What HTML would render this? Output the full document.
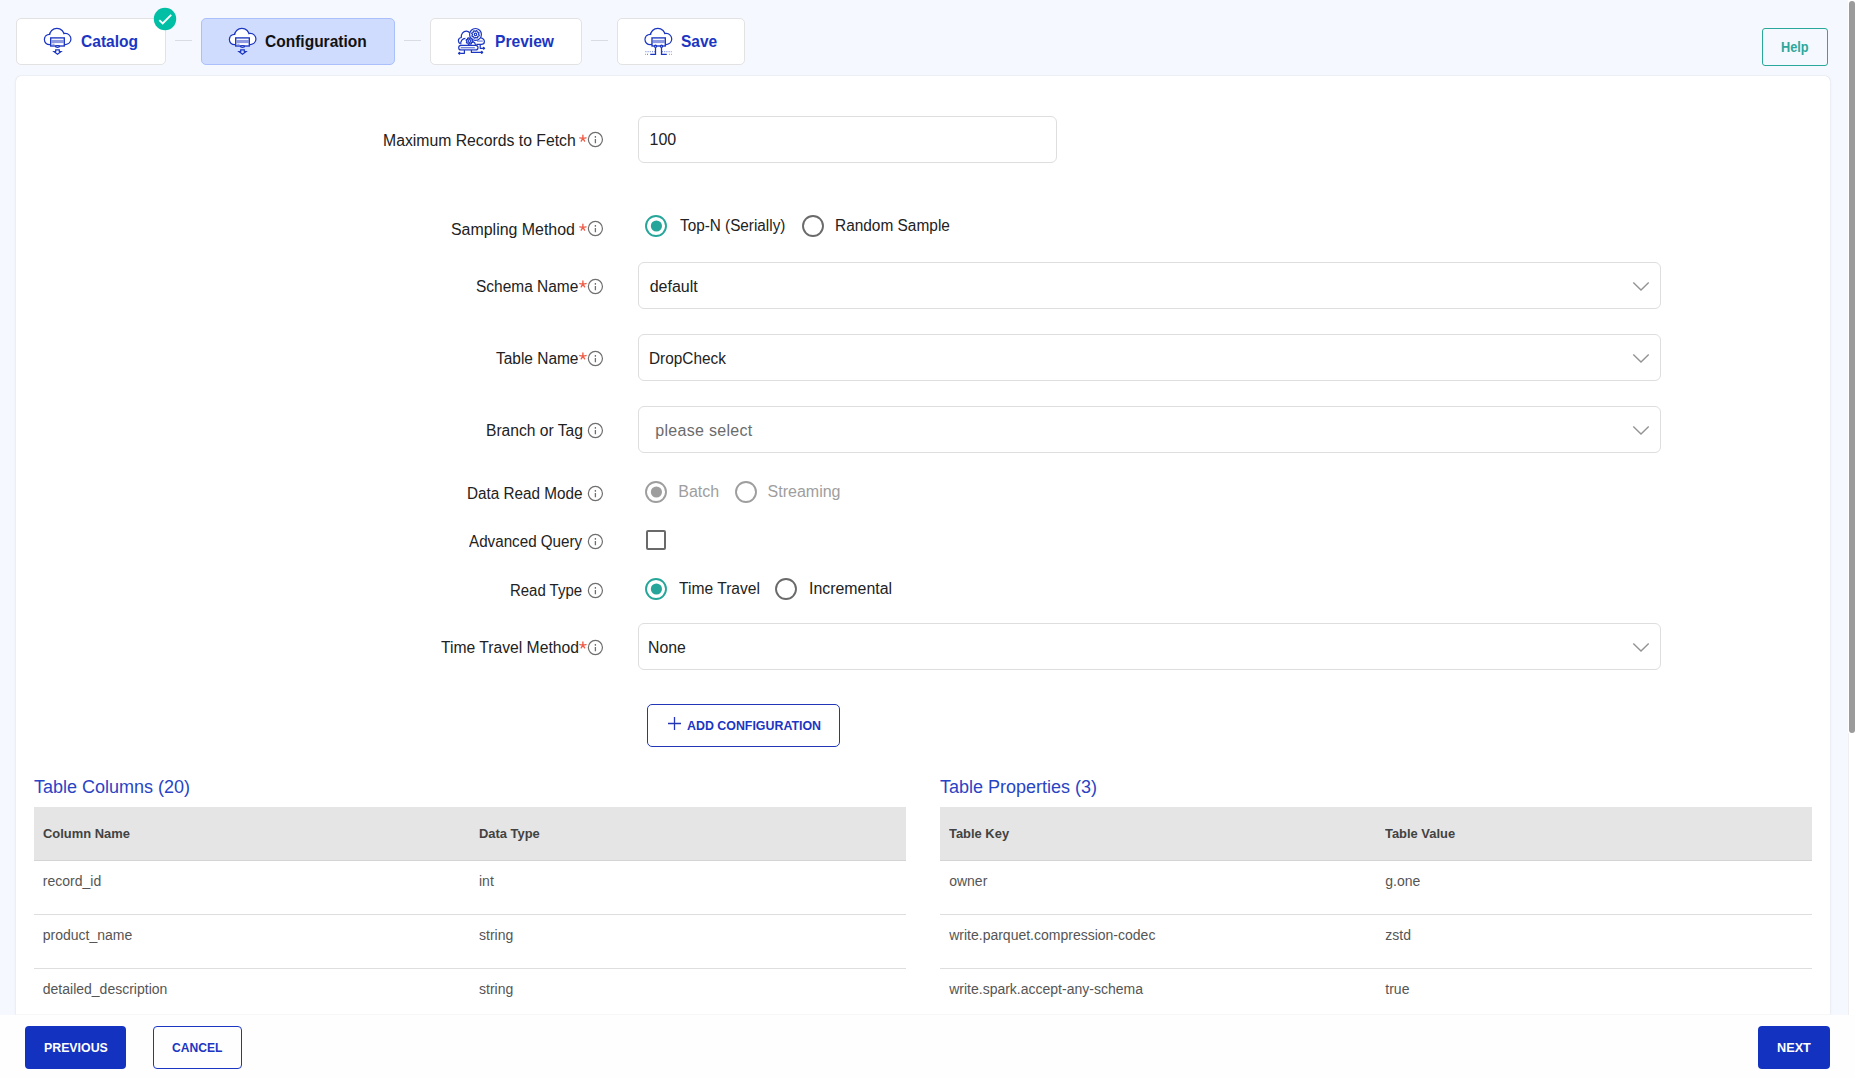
<!DOCTYPE html>
<html><head><meta charset="utf-8">
<style>
*{box-sizing:border-box;margin:0;padding:0}
html,body{width:1855px;height:1078px;overflow:hidden}
body{background:#f5f8fe;font-family:"Liberation Sans",sans-serif;position:relative;color:#222}
.a{position:absolute}
.t{position:absolute;line-height:1;white-space:nowrap}
.tab{position:absolute;top:18px;height:47px;background:#fff;border:1px solid #e2e2e2;border-radius:5px}
.tab.act{background:#d0dcfd;border-color:#abc0fb}
.conn{position:absolute;top:40px;height:1px;background:#d9dde3}
.card{position:absolute;left:16px;top:76px;width:1814px;height:939px;background:#fff;border-radius:5px 5px 0 0;box-shadow:0 0 1px rgba(0,0,0,.22),0 1px 4px rgba(0,0,0,.05)}
.box{position:absolute;left:638px;width:1023px;height:47px;border:1px solid #dedede;border-radius:6px;background:#fff}
.th{position:absolute;top:807px;height:54px;background:#e5e5e5;border-bottom:1px solid #d4d4d4}
.rl{position:absolute;height:1px;background:#dedede}
</style></head>
<body>
<div class="tab" style="left:16px;width:150px"></div>
<div class="conn" style="left:175px;width:17px"></div>
<div class="tab act" style="left:201px;width:194px"></div>
<div class="conn" style="left:404px;width:17px"></div>
<div class="tab" style="left:430px;width:152px"></div>
<div class="conn" style="left:591px;width:17px"></div>
<div class="tab" style="left:617px;width:128px"></div>
<div class="t" style="left:80.50px;top:32.81px;font-size:17px;color:#1b36c2;font-weight:700;transform:scaleX(0.915);transform-origin:left center;">Catalog</div>

<div class="t" style="left:265.30px;top:32.81px;font-size:17px;color:#111;font-weight:700;transform:scaleX(0.913);transform-origin:left center;">Configuration</div>

<div class="t" style="left:494.70px;top:32.81px;font-size:17px;color:#1b36c2;font-weight:700;transform:scaleX(0.918);transform-origin:left center;">Preview</div>

<div class="t" style="left:681.20px;top:32.81px;font-size:17px;color:#1b36c2;font-weight:700;transform:scaleX(0.912);transform-origin:left center;">Save</div>

<svg class="a" style="left:40px;top:24px" width="36" height="34" viewBox="0 0 36 34" stroke="#1b36c2" stroke-width="1.25" fill="none">
<g fill="none"><circle cx="9.6" cy="15.5" r="4.6" stroke-width="2.5"/><circle cx="16.9" cy="11.7" r="6.8" stroke-width="2.5"/><circle cx="25.4" cy="15.0" r="4.9" stroke-width="2.5"/></g><g fill="#fff" stroke="none"><circle cx="9.6" cy="15.5" r="4.6"/><circle cx="16.9" cy="11.7" r="6.8"/><circle cx="25.4" cy="15.0" r="4.9"/></g>
<rect x="10.7" y="13.9" width="13.6" height="8.1" fill="#fff" stroke-width="1.35"/>
<rect x="11.6" y="15.9" width="12" height="3.2" fill="#1b36c2" stroke="none" opacity=".5"/>
<path d="M12.2 20.3h2.4" opacity=".45"/>
<ellipse cx="17.5" cy="22.4" rx="2" ry=".85" fill="#fff"/>
<path d="M15.7 25.8H19.3V27.7H21L17.5 30.3L14 27.7H15.7Z" stroke-width="1.2"/>
</svg>
<svg class="a" style="left:224.5px;top:24px" width="36" height="34" viewBox="0 0 36 34" stroke="#1b36c2" stroke-width="1.25" fill="none">
<g fill="none"><circle cx="9.6" cy="15.5" r="4.6" stroke-width="2.5"/><circle cx="16.9" cy="11.7" r="6.8" stroke-width="2.5"/><circle cx="25.4" cy="15.0" r="4.9" stroke-width="2.5"/></g><g fill="#fff" stroke="none"><circle cx="9.6" cy="15.5" r="4.6"/><circle cx="16.9" cy="11.7" r="6.8"/><circle cx="25.4" cy="15.0" r="4.9"/></g>
<rect x="10.7" y="13.9" width="13.6" height="8.1" fill="#fff" stroke-width="1.35"/>
<rect x="11.6" y="15.9" width="12" height="3.2" fill="#1b36c2" stroke="none" opacity=".5"/>
<path d="M12.2 20.3h2.4" opacity=".45"/>
<ellipse cx="17.5" cy="22.4" rx="2" ry=".85" fill="#fff"/>
<path d="M15.7 25.8H19.3V27.7H21L17.5 30.3L14 27.7H15.7Z" stroke-width="1.2"/>
</svg>
<svg class="a" style="left:454px;top:24px" width="36" height="34" viewBox="0 0 36 34" stroke="#1b36c2" stroke-width="1.2" fill="none" stroke-linejoin="round">
<path d="M6.2 19.6C4.9 19 4.4 17.8 4.4 16.7c0-1.6 1.2-2.9 2.9-3.2-.3-3.7 2.1-6.3 5-6.3 1.6 0 2.7.7 3.5 1.8"/>
<circle cx="21.5" cy="10.4" r="5.9" fill="#fff"/>
<path d="M21.50 7.30 L22.26 6.57 L22.99 6.80 L23.22 7.82 L23.69 8.21 L24.74 8.23 L25.10 8.91 L24.54 9.80 L24.60 10.40 L25.33 11.16 L25.10 11.89 L24.08 12.12 L23.69 12.59 L23.67 13.64 L22.99 14.00 L22.10 13.44 L21.50 13.50 L20.74 14.23 L20.01 14.00 L19.78 12.98 L19.31 12.59 L18.26 12.57 L17.90 11.89 L18.46 11.00 L18.40 10.40 L17.67 9.64 L17.90 8.91 L18.92 8.68 L19.31 8.21 L19.33 7.16 L20.01 6.80 L20.90 7.36Z"/>
<circle cx="21.5" cy="10.4" r="1.2"/>
<path d="M26.3 13.6c2.4.5 4.1 2.1 4.1 4.2 0 1.6-1.3 2.6-3.3 2.6H22.3"/>
<path d="M23 17.1h5.8" stroke-width="1.5" opacity=".5"/>
<path d="M6.8 20.3c-.5-3.3 1.7-5.9 4.6-6" />
<path d="M15.50 14.30 L16.16 13.67 L16.80 13.86 L17.00 14.76 L17.41 15.09 L18.33 15.11 L18.64 15.70 L18.15 16.47 L18.20 17.00 L18.83 17.66 L18.64 18.30 L17.74 18.50 L17.41 18.91 L17.39 19.83 L16.80 20.14 L16.03 19.65 L15.50 19.70 L14.84 20.33 L14.20 20.14 L14.00 19.24 L13.59 18.91 L12.67 18.89 L12.36 18.30 L12.85 17.53 L12.80 17.00 L12.17 16.34 L12.36 15.70 L13.26 15.50 L13.59 15.09 L13.61 14.17 L14.20 13.86 L14.97 14.35Z" fill="#fff"/>
<circle cx="15.5" cy="17" r="1.4"/>
<path d="M18.8 17.6c1.4.3 2.5 1.5 2.8 3.2"/>
<rect x="4.7" y="21.3" width="19.3" height="4.7" rx="2.3" fill="#fff"/>
<path d="M6.8 23.6H20.8" stroke-width="1.3" opacity=".6"/>
<path d="M5.6 25.3H23" stroke-width="1.1" opacity=".45"/>
<path d="M10.4 26.1V29.3H6.3M17.4 26.1V28.4H27M26.2 21.1V24.3H28.8"/>
<path d="M5.4 28.4l.9.9-.9.9-.9-.9zM27.8 27.5l.9.9-.9.9-.9-.9zM29.7 23.4l.9.9-.9.9-.9-.9z" fill="#1b36c2"/>
</svg>
<svg class="a" style="left:640px;top:24px" width="36" height="34" viewBox="0 0 36 34" stroke="#1b36c2" stroke-width="1.25" fill="none">
<g fill="none"><circle cx="10.2" cy="15.5" r="4.6" stroke-width="2.5"/><circle cx="17.8" cy="11.7" r="6.8" stroke-width="2.5"/><circle cx="26.2" cy="15.0" r="4.9" stroke-width="2.5"/></g><g fill="#fff" stroke="none"><circle cx="10.2" cy="15.5" r="4.6"/><circle cx="17.8" cy="11.7" r="6.8"/><circle cx="26.2" cy="15.0" r="4.9"/></g>
<rect x="12" y="13.9" width="13.3" height="8.1" fill="#fff" stroke-width="1.35"/>
<rect x="12.8" y="15.9" width="11.8" height="3.2" fill="#1b36c2" stroke="none" opacity=".5"/>
<circle cx="15.5" cy="22.3" r="1.1" fill="#fff"/><circle cx="21.5" cy="22.3" r="1.1" fill="#fff"/>
<path d="M15.5 23.4V30.4H10.2M21.5 23.4V30.4H26.8"/>
<path d="M5.4 30.4h.4M7.4 30.4h.6M29 30.4h.4M31.2 30.4h.4" stroke-width="1.1"/>
<path d="M5.4 27.6H15M22 27.6H31.6" stroke-width="1.1" stroke-dasharray="1 1.2" opacity=".55"/>
</svg>
<svg class="a" style="left:153px;top:7px" width="24" height="24" viewBox="0 0 24 24"><circle cx="12" cy="12" r="11.2" fill="#00bfa5"/><path d="M6.3 13.1l3.4 3.3 8.5-8.5" fill="none" stroke="#fff" stroke-width="1.9"/></svg>
<div class="a" style="left:1762px;top:28px;width:66px;height:38px;border:1px solid #2aa89b;border-radius:3px"></div>
<div class="t" style="left:1780.80px;top:40.13px;font-size:14.5px;color:#2ea89c;font-weight:700;transform:scaleX(0.88);transform-origin:left center;">Help</div>

<div class="card"></div>
<div class="t" style="left:382.61px;top:133.06px;font-size:16px;color:#222;font-weight:400;transform:scaleX(0.9851);transform-origin:left center;">Maximum Records to Fetch</div>

<svg class="a" style="left:0;top:0;overflow:visible" width="1" height="1"><path d="M582.90 138.40L582.90 135.20M582.90 138.40L586.05 137.84M582.90 138.40L579.75 137.84M582.90 138.40L584.60 141.11M582.90 138.40L581.20 141.11" stroke="#ef5b45" stroke-width="1.35" stroke-linecap="round"/></svg>
<svg class="a" style="left:587px;top:131.30px" width="17" height="17" viewBox="0 0 17 17" fill="none" stroke="#6f6f6f" stroke-width="1.2"><circle cx="8.4" cy="8.5" r="7.05"/><path d="M8.4 7.9v4.3M8.4 5.1v1.7" stroke-width="1.3"/></svg>
<div class="t" style="left:451.30px;top:222.06px;font-size:16px;color:#222;font-weight:400;transform:scaleX(0.9951);transform-origin:left center;">Sampling Method</div>

<svg class="a" style="left:0;top:0;overflow:visible" width="1" height="1"><path d="M582.90 227.40L582.90 224.20M582.90 227.40L586.05 226.84M582.90 227.40L579.75 226.84M582.90 227.40L584.60 230.11M582.90 227.40L581.20 230.11" stroke="#ef5b45" stroke-width="1.35" stroke-linecap="round"/></svg>
<svg class="a" style="left:587px;top:220.20px" width="17" height="17" viewBox="0 0 17 17" fill="none" stroke="#6f6f6f" stroke-width="1.2"><circle cx="8.4" cy="8.5" r="7.05"/><path d="M8.4 7.9v4.3M8.4 5.1v1.7" stroke-width="1.3"/></svg>
<div class="t" style="left:475.83px;top:278.76px;font-size:16px;color:#222;font-weight:400;transform:scaleX(0.9667);transform-origin:left center;">Schema Name</div>

<svg class="a" style="left:0;top:0;overflow:visible" width="1" height="1"><path d="M582.90 284.10L582.90 280.90M582.90 284.10L586.05 283.54M582.90 284.10L579.75 283.54M582.90 284.10L584.60 286.81M582.90 284.10L581.20 286.81" stroke="#ef5b45" stroke-width="1.35" stroke-linecap="round"/></svg>
<svg class="a" style="left:587px;top:277.50px" width="17" height="17" viewBox="0 0 17 17" fill="none" stroke="#6f6f6f" stroke-width="1.2"><circle cx="8.4" cy="8.5" r="7.05"/><path d="M8.4 7.9v4.3M8.4 5.1v1.7" stroke-width="1.3"/></svg>
<div class="t" style="left:496.20px;top:350.76px;font-size:16px;color:#222;font-weight:400;transform:scaleX(0.9659);transform-origin:left center;">Table Name</div>

<svg class="a" style="left:0;top:0;overflow:visible" width="1" height="1"><path d="M582.90 356.10L582.90 352.90M582.90 356.10L586.05 355.54M582.90 356.10L579.75 355.54M582.90 356.10L584.60 358.81M582.90 356.10L581.20 358.81" stroke="#ef5b45" stroke-width="1.35" stroke-linecap="round"/></svg>
<svg class="a" style="left:587px;top:349.50px" width="17" height="17" viewBox="0 0 17 17" fill="none" stroke="#6f6f6f" stroke-width="1.2"><circle cx="8.4" cy="8.5" r="7.05"/><path d="M8.4 7.9v4.3M8.4 5.1v1.7" stroke-width="1.3"/></svg>
<div class="t" style="left:485.82px;top:422.96px;font-size:16px;color:#222;font-weight:400;transform:scaleX(0.9765);transform-origin:left center;">Branch or Tag</div>

<svg class="a" style="left:587px;top:421.50px" width="17" height="17" viewBox="0 0 17 17" fill="none" stroke="#6f6f6f" stroke-width="1.2"><circle cx="8.4" cy="8.5" r="7.05"/><path d="M8.4 7.9v4.3M8.4 5.1v1.7" stroke-width="1.3"/></svg>
<div class="t" style="left:466.55px;top:485.66px;font-size:16px;color:#222;font-weight:400;transform:scaleX(0.9542);transform-origin:left center;">Data Read Mode</div>

<svg class="a" style="left:587px;top:484.50px" width="17" height="17" viewBox="0 0 17 17" fill="none" stroke="#6f6f6f" stroke-width="1.2"><circle cx="8.4" cy="8.5" r="7.05"/><path d="M8.4 7.9v4.3M8.4 5.1v1.7" stroke-width="1.3"/></svg>
<div class="t" style="left:469.00px;top:533.96px;font-size:16px;color:#222;font-weight:400;transform:scaleX(0.9496);transform-origin:left center;">Advanced Query</div>

<svg class="a" style="left:587px;top:532.50px" width="17" height="17" viewBox="0 0 17 17" fill="none" stroke="#6f6f6f" stroke-width="1.2"><circle cx="8.4" cy="8.5" r="7.05"/><path d="M8.4 7.9v4.3M8.4 5.1v1.7" stroke-width="1.3"/></svg>
<div class="t" style="left:510.07px;top:582.66px;font-size:16px;color:#222;font-weight:400;transform:scaleX(0.9342);transform-origin:left center;">Read Type</div>

<svg class="a" style="left:587px;top:581.50px" width="17" height="17" viewBox="0 0 17 17" fill="none" stroke="#6f6f6f" stroke-width="1.2"><circle cx="8.4" cy="8.5" r="7.05"/><path d="M8.4 7.9v4.3M8.4 5.1v1.7" stroke-width="1.3"/></svg>
<div class="t" style="left:441.30px;top:639.86px;font-size:16px;color:#222;font-weight:400;transform:scaleX(0.9793);transform-origin:left center;">Time Travel Method</div>

<svg class="a" style="left:0;top:0;overflow:visible" width="1" height="1"><path d="M582.90 645.20L582.90 642.00M582.90 645.20L586.05 644.64M582.90 645.20L579.75 644.64M582.90 645.20L584.60 647.91M582.90 645.20L581.20 647.91" stroke="#ef5b45" stroke-width="1.35" stroke-linecap="round"/></svg>
<svg class="a" style="left:587px;top:638.50px" width="17" height="17" viewBox="0 0 17 17" fill="none" stroke="#6f6f6f" stroke-width="1.2"><circle cx="8.4" cy="8.5" r="7.05"/><path d="M8.4 7.9v4.3M8.4 5.1v1.7" stroke-width="1.3"/></svg>
<div class="box" style="top:116px;width:419px"></div>
<div class="t" style="left:649.50px;top:132.26px;font-size:16px;color:#222;font-weight:400;">100</div>

<svg class="a" style="left:645px;top:215px" width="22" height="22" viewBox="0 0 22 22"><circle cx="11" cy="11" r="10" fill="none" stroke="#26a69a" stroke-width="1.9"/><circle cx="11.4" cy="11" r="5.6" fill="#26a69a"/></svg>
<div class="t" style="left:679.70px;top:217.56px;font-size:16px;color:#222;font-weight:400;transform:scaleX(0.956);transform-origin:left center;">Top-N (Serially)</div>

<svg class="a" style="left:802px;top:215px" width="22" height="22" viewBox="0 0 22 22"><circle cx="11" cy="11" r="10" fill="none" stroke="#6a6a6a" stroke-width="1.9"/></svg>
<div class="t" style="left:835.04px;top:217.56px;font-size:16px;color:#222;font-weight:400;transform:scaleX(0.964);transform-origin:left center;">Random Sample</div>

<div class="box" style="top:262px"></div>
<div class="t" style="left:649.70px;top:278.76px;font-size:16px;color:#222;font-weight:400;">default</div>

<svg class="a" style="left:1632px;top:279.50px" width="18" height="12" viewBox="0 0 18 12" fill="none" stroke="#939393" stroke-width="1.4"><path d="M1.3 2.6l7.7 7.5 7.7-7.5"/></svg>
<div class="box" style="top:334px"></div>
<div class="t" style="left:648.50px;top:350.76px;font-size:16px;color:#222;font-weight:400;transform:scaleX(0.96);transform-origin:left center;">DropCheck</div>

<svg class="a" style="left:1632px;top:351.50px" width="18" height="12" viewBox="0 0 18 12" fill="none" stroke="#939393" stroke-width="1.4"><path d="M1.3 2.6l7.7 7.5 7.7-7.5"/></svg>
<div class="box" style="top:406px"></div>
<div class="t" style="left:655.30px;top:422.76px;font-size:16px;color:#6b6b6b;font-weight:400;letter-spacing:0.3px;">please select</div>

<svg class="a" style="left:1632px;top:423.50px" width="18" height="12" viewBox="0 0 18 12" fill="none" stroke="#939393" stroke-width="1.4"><path d="M1.3 2.6l7.7 7.5 7.7-7.5"/></svg>
<div class="box" style="top:623px"></div>
<div class="t" style="left:648.30px;top:639.76px;font-size:16px;color:#222;font-weight:400;transform:scaleX(0.987);transform-origin:left center;">None</div>

<svg class="a" style="left:1632px;top:640.50px" width="18" height="12" viewBox="0 0 18 12" fill="none" stroke="#939393" stroke-width="1.4"><path d="M1.3 2.6l7.7 7.5 7.7-7.5"/></svg>
<svg class="a" style="left:645px;top:481px" width="22" height="22" viewBox="0 0 22 22"><circle cx="11" cy="11" r="10" fill="none" stroke="#9e9e9e" stroke-width="1.9"/><circle cx="11.4" cy="11" r="5.6" fill="#9e9e9e"/></svg>
<div class="t" style="left:678.30px;top:483.76px;font-size:16px;color:#9e9e9e;font-weight:400;">Batch</div>

<svg class="a" style="left:735px;top:481px" width="22" height="22" viewBox="0 0 22 22"><circle cx="11" cy="11" r="10" fill="none" stroke="#9e9e9e" stroke-width="1.9"/></svg>
<div class="t" style="left:767.60px;top:483.76px;font-size:16px;color:#9e9e9e;font-weight:400;">Streaming</div>

<div class="a" style="left:646px;top:530px;width:20px;height:20px;border:2px solid #6a6a6a;border-radius:2px"></div>
<svg class="a" style="left:645px;top:578px" width="22" height="22" viewBox="0 0 22 22"><circle cx="11" cy="11" r="10" fill="none" stroke="#26a69a" stroke-width="1.9"/><circle cx="11.4" cy="11" r="5.6" fill="#26a69a"/></svg>
<div class="t" style="left:678.70px;top:581.06px;font-size:16px;color:#222;font-weight:400;transform:scaleX(0.976);transform-origin:left center;">Time Travel</div>

<svg class="a" style="left:775px;top:578px" width="22" height="22" viewBox="0 0 22 22"><circle cx="11" cy="11" r="10" fill="none" stroke="#6a6a6a" stroke-width="1.9"/></svg>
<div class="t" style="left:808.90px;top:581.06px;font-size:16px;color:#222;font-weight:400;transform:scaleX(0.993);transform-origin:left center;">Incremental</div>

<div class="a" style="left:647px;top:704px;width:193px;height:43px;border:1px solid #2336b8;border-radius:5px"></div>
<svg class="a" style="left:667px;top:716px" width="15" height="15" viewBox="0 0 15 15" stroke="#2336b8" stroke-width="1.3"><path d="M7.5 1v13M1 7.5h13"/></svg>
<div class="t" style="left:687.10px;top:719.17px;font-size:13.5px;color:#1b36c2;font-weight:700;transform:scaleX(0.918);transform-origin:left center;">ADD CONFIGURATION</div>

<div class="t" style="left:34.00px;top:778.26px;font-size:18px;color:#2844c4;font-weight:400;">Table Columns (20)</div>

<div class="t" style="left:940.00px;top:778.26px;font-size:18px;color:#2844c4;font-weight:400;">Table Properties (3)</div>

<div class="th" style="left:34px;width:872px"></div>
<div class="th" style="left:940px;width:872px"></div>
<div class="t" style="left:42.80px;top:826.87px;font-size:13.5px;color:#424242;font-weight:700;transform:scaleX(0.957);transform-origin:left center;">Column Name</div>

<div class="t" style="left:479.00px;top:826.87px;font-size:13.5px;color:#424242;font-weight:700;transform:scaleX(0.957);transform-origin:left center;">Data Type</div>

<div class="t" style="left:949.20px;top:826.87px;font-size:13.5px;color:#424242;font-weight:700;transform:scaleX(0.957);transform-origin:left center;">Table Key</div>

<div class="t" style="left:1385.30px;top:826.87px;font-size:13.5px;color:#424242;font-weight:700;transform:scaleX(0.957);transform-origin:left center;">Table Value</div>

<div class="t" style="left:42.80px;top:874.15px;font-size:14px;color:#555;font-weight:400;">record_id</div>

<div class="t" style="left:479.00px;top:874.15px;font-size:14px;color:#555;font-weight:400;">int</div>

<div class="t" style="left:949.20px;top:874.15px;font-size:14px;color:#555;font-weight:400;">owner</div>

<div class="t" style="left:1385.30px;top:874.15px;font-size:14px;color:#555;font-weight:400;">g.one</div>

<div class="t" style="left:42.80px;top:928.15px;font-size:14px;color:#555;font-weight:400;">product_name</div>

<div class="t" style="left:479.00px;top:928.15px;font-size:14px;color:#555;font-weight:400;">string</div>

<div class="t" style="left:949.20px;top:928.15px;font-size:14px;color:#555;font-weight:400;">write.parquet.compression-codec</div>

<div class="t" style="left:1385.30px;top:928.15px;font-size:14px;color:#555;font-weight:400;">zstd</div>

<div class="t" style="left:42.80px;top:982.15px;font-size:14px;color:#555;font-weight:400;">detailed_description</div>

<div class="t" style="left:479.00px;top:982.15px;font-size:14px;color:#555;font-weight:400;">string</div>

<div class="t" style="left:949.20px;top:982.15px;font-size:14px;color:#555;font-weight:400;">write.spark.accept-any-schema</div>

<div class="t" style="left:1385.30px;top:982.15px;font-size:14px;color:#555;font-weight:400;">true</div>

<div class="rl" style="left:34px;top:914px;width:872px"></div>
<div class="rl" style="left:940px;top:914px;width:872px"></div>
<div class="rl" style="left:34px;top:968px;width:872px"></div>
<div class="rl" style="left:940px;top:968px;width:872px"></div>
<div class="a" style="left:1848px;top:0;width:7px;height:1015px;background:#fff"></div>
<div class="a" style="left:1848px;top:733px;width:1px;height:282px;background:#efefef"></div>
<div class="a" style="left:1849px;top:1px;width:6px;height:732px;background:#9b9b9b;border-radius:3px"></div>
<div class="a" style="left:16px;top:1014px;width:1814px;height:1px;background:#f7f7f7"></div>
<div class="a" style="left:0;top:1015px;width:1855px;height:63px;background:#fefefe"></div>
<div class="a" style="left:25px;top:1026px;width:101px;height:43px;background:#1232bf;border-radius:4px"></div>
<div class="t" style="left:43.60px;top:1041.37px;font-size:13.5px;color:#fff;font-weight:700;transform:scaleX(0.914);transform-origin:left center;">PREVIOUS</div>

<div class="a" style="left:153px;top:1026px;width:89px;height:43px;border:1px solid #1b36c2;border-radius:4px"></div>
<div class="t" style="left:172.30px;top:1041.37px;font-size:13.5px;color:#1b36c2;font-weight:700;transform:scaleX(0.895);transform-origin:left center;">CANCEL</div>

<div class="a" style="left:1758px;top:1026px;width:72px;height:43px;background:#1232bf;border-radius:4px"></div>
<div class="t" style="left:1777.30px;top:1041.37px;font-size:13.5px;color:#fff;font-weight:700;transform:scaleX(0.94);transform-origin:left center;">NEXT</div>

</body></html>
